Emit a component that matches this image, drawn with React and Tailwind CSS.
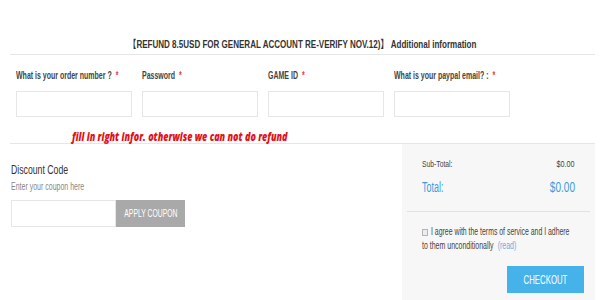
// Reference text is horizontally condensed; each text run is squeezed with scale-x.
function N({ children, className = '', o = 'origin-left' }) {
  return <span className={`inline-block whitespace-nowrap shrink-0 ${o} ${className}`}>{children}</span>
}

export default function App() {
  const sans = { fontFamily: '"Liberation Sans", Arial, "Noto Sans CJK SC", sans-serif' }
  const fields = [
    'What is your order number ?',
    'Password',
    'GAME ID',
    'What is your paypal email? :',
  ]

  return (
    <div className="w-[600px] h-[300px] bg-white overflow-hidden text-[#333]" style={sans}>
      <div className="ml-[10px] mr-[5px] pt-[37px]">
        <h2 className="text-center font-bold text-[11px] leading-[14px] pb-[3px] border-b border-[#e6e6e6]">
          <N o="origin-center" className="scale-x-[0.73]">
            【REFUND 8.5USD FOR GENERAL ACCOUNT RE-VERIFY NOV.12)】 Additional information
          </N>
        </h2>

        <div className="flex gap-[10px] pl-[6px] pt-[15px]">
          {fields.map((f) => (
            <div key={f} className="w-[116px]">
              <div className="text-[10px] font-bold text-[#444] leading-[12px] h-[12px]">
                <N className="scale-x-[0.7]">
                  {f} <span className="text-[#e04040] ml-[3px]">*</span>
                </N>
              </div>
              <input className="mt-[9px] block w-[116px] h-[26px] border border-[#e6e6e6] bg-white outline-none" />
            </div>
          ))}
        </div>

        <p
          className="pl-[62px] mt-[12px] text-[13px] leading-[14px] font-extrabold italic text-[#e3101a]"
          style={{ fontFamily: '"Open Sans", "Liberation Sans", sans-serif' }}
        >
          <N className="scale-x-[0.69]">fill in right infor. otherwise we can not do refund</N>
        </p>

        <div className="border-t border-[#e6e6e6] flex h-[160px]">
          <div className="flex-1 pl-[1px] pt-[18px]">
            <div className="text-[13px] leading-[15px] text-[#333]">
              <N className="scale-x-[0.67]">Discount Code</N>
            </div>
            <div className="mt-[4px] text-[10px] leading-[12px] text-[#888]">
              <N className="scale-x-[0.7]">Enter your coupon here</N>
            </div>
            <div className="mt-[7px] flex">
              <input className="w-[105px] h-[27px] border border-[#e6e6e6] outline-none" />
              <button className="w-[69px] h-[27px] bg-[#a9a9a9] text-white text-[11px] leading-[27px] flex justify-center overflow-hidden">
                <N o="origin-center" className="scale-x-[0.62]">APPLY COUPON</N>
              </button>
            </div>
          </div>

          <div className="w-[193px] bg-[#f7f7f7] pt-[14px]">
            <div className="px-[20px]">
              <div className="flex justify-between text-[9px] leading-[12px] text-[#444]">
                <N className="scale-x-[0.75]">Sub-Total:</N>
                <N o="origin-right" className="scale-x-[0.8]">$0.00</N>
              </div>
              <div className="mt-[8px] flex justify-between text-[14px] leading-[18px] text-[#3d9cdb]">
                <N className="scale-x-[0.64]">Total:</N>
                <N o="origin-right" className="scale-x-[0.72]">$0.00</N>
              </div>
            </div>
            <div className="mx-[5px] mt-[15px] border-t border-[#e2e2e2]" />
            <div className="pl-[20px] pr-[10px] pt-[13px] text-[10px] leading-[14px] text-[#444]">
              <div className="flex items-center">
                <span className="w-[6px] h-[7px] border border-[#b5b5b5] bg-[#ececec] mr-[3px] shrink-0" />
                <N className="scale-x-[0.69]">I agree with the terms of service and I adhere</N>
              </div>
              <div>
                <N className="scale-x-[0.7]">
                  to them unconditionally <span className="text-[#6aaee0] ml-[3px]">(read)</span>
                </N>
              </div>
            </div>
            <div className="flex justify-end pr-[11px] mt-[13px]">
              <button className="w-[77px] h-[27px] bg-[#45b3ea] text-white text-[13px] leading-[27px] flex justify-center overflow-hidden">
                <N o="origin-center" className="scale-x-[0.6]">CHECKOUT</N>
              </button>
            </div>
          </div>
        </div>
      </div>
    </div>
  )
}
